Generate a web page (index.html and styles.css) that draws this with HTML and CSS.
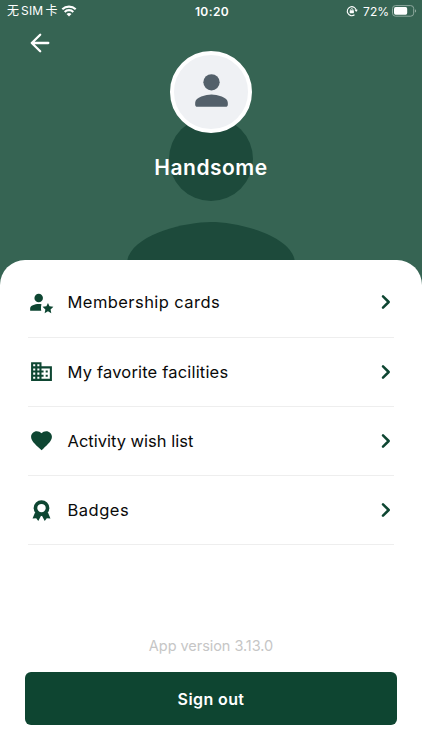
FILE: index.html
```html
<!DOCTYPE html>
<html lang="en">
<head>
  <meta charset="UTF-8" />
  <meta name="viewport" content="width=device-width, initial-scale=1.0"/>
  <title>Profile</title>
  <link rel="stylesheet" href="styles.css">
</head>
<body>

  <header class="hero">
    <svg class="hero-shape" viewBox="0 0 24 24">
      <circle cx="12" cy="8" r="4"/>
      <path d="M12 14c-2.67 0-8 1.34-8 4v2h16v-2c0-2.66-5.33-4-8-4z"/>
    </svg>

    <div class="status-bar">
      <div class="status-left">
        <span class="carrier">无<span class="sim">SIM</span>卡</span>
        <svg class="wifi" viewBox="0 0 16 12">
          <path d="M1.3 4.3a9.6 9.6 0 0 1 13.4 0M3.7 6.9a6.2 6.2 0 0 1 8.6 0"/>
          <path class="dot" d="M8 11.6L5.5 9.1a3.6 3.6 0 0 1 5 0z"/>
        </svg>
      </div>
      <span class="time">10:20</span>
      <div class="status-right">
        <svg class="lock" viewBox="0 0 12 12">
          <path d="M10.2 5.2A4.5 4.5 0 1 0 8.500 9.800"/>
          <path class="fill" d="M8.500 4.800h3.300L10.200 7z"/>
          <rect class="fill" x="3.700" y="5.200" width="4.200" height="3.100" rx=".5"/>
          <path class="shackle" d="M4.700 5.400v-.7a1.100 1.100 0 0 1 2.200 0v.7"/>
        </svg>
        <span class="percent">72%</span>
        <svg class="battery" viewBox="0 0 25 12">
          <rect class="shell" x=".5" y=".6" width="21.2" height="10.6" rx="3"/>
          <rect class="level" x="2" y="2.1" width="13.2" height="7.6" rx="1.6"/>
          <path class="nub" d="M23 4.2c1.5.4 1.5 3 0 3.4z"/>
        </svg>
      </div>
    </div>

    <button class="back" aria-label="Back">
      <svg viewBox="0 0 20 20">
        <path d="M18.3 10H1.8M10.2 1.8L1.8 10l8.4 8.2"/>
      </svg>
    </button>

    <div class="profile">
      <div class="avatar">
        <svg viewBox="0 0 24 24">
          <circle cx="12" cy="8" r="4"/>
          <path d="M12 14c-2.67 0-8 1.34-8 4v1c0 .55.45 1 1 1h14c.55 0 1-.45 1-1v-1c0-2.66-5.33-4-8-4z"/>
        </svg>
      </div>
      <h1>Handsome</h1>
    </div>
  </header>

  <main class="sheet">
    <nav class="menu">
      <a class="item">
        <svg class="icon" viewBox="0 0 24 24">
          <circle cx="9.3" cy="7.6" r="4.1"/>
          <path d="M12 13.700c-4.300-1-10.900.8-10.900 4V20h10.700c-.5-2-.4-4.200.2-6.300z"/>
          <path d="M18.200 12.400l1.500 3.300 3.700.4-2.700 2.500.7 3.600-3.200-1.800-3.200 1.800.7-3.600-2.700-2.500 3.700-.4z"/>
        </svg>
        <span class="label cards">Membership cards</span>
        <svg class="chevron" viewBox="0 0 10 16"><path d="M2 2.300L7.700 8 2 13.700"/></svg>
      </a>
      <a class="item">
        <svg class="icon" viewBox="0 0 24 24">
          <path d="M12 7V3H2v18h20V7H12zM6 19H4v-2h2v2zm0-4H4v-2h2v2zm0-4H4V9h2v2zm0-4H4V5h2v2zm4 12H8v-2h2v2zm0-4H8v-2h2v2zm0-4H8V9h2v2zm0-4H8V5h2v2zm10 12h-8v-2h2v-2h-2v-2h2v-2h-2V9h8v10zm-2-8h-2v2h2v-2zm0 4h-2v2h2v-2z"/>
        </svg>
        <span class="label facilities">My favorite facilities</span>
        <svg class="chevron" viewBox="0 0 10 16"><path d="M2 2.300L7.700 8 2 13.700"/></svg>
      </a>
      <a class="item">
        <svg class="icon" viewBox="0 0 24 24">
          <path d="M12 21.350l-1.450-1.320C5.400 15.360 2 12.280 2 8.500 2 5.420 4.420 3 7.500 3c1.740 0 3.410.81 4.500 2.090C13.090 3.810 14.760 3 16.500 3 19.580 3 22 5.420 22 8.500c0 3.780-3.400 6.860-8.550 11.540z"/>
        </svg>
        <span class="label wish">Activity wish list</span>
        <svg class="chevron" viewBox="0 0 10 16"><path d="M2 2.300L7.700 8 2 13.700"/></svg>
      </a>
      <a class="item">
        <svg class="icon" viewBox="0 0 24 24">
          <circle class="ring" cx="12" cy="9.700" r="5.800"/>
          <path d="M5.800 13.800l-2.400 5.800 3.500-.2 2 2.700 2.800-5.300zM18.200 13.800l2.400 5.800-3.500-.2-2 2.700-2.800-5.300z"/>
        </svg>
        <span class="label badges">Badges</span>
        <svg class="chevron" viewBox="0 0 10 16"><path d="M2 2.300L7.700 8 2 13.700"/></svg>
      </a>
    </nav>

    <footer>
      <p class="version">App version 3.13.0</p>
      <button class="sign-out"><span>Sign out</span></button>
    </footer>
  </main>

</body>
</html>
```
FILE: styles.css
```css
* {
  box-sizing: border-box;
}

body {
  font-family: Inter, "Noto Sans CJK SC", sans-serif;
  margin: 0;
  height: 750px;
  display: flex;
  flex-direction: column;
  background-color: #366453;
  color: #0a0a0a;
  overflow: hidden;
}

svg {
  display: block;
  flex: none;
}

button {
  border: none;
  padding: 0;
  font-family: inherit;
  cursor: pointer;
}

.hero {
  position: relative;
  height: 260px;
  flex: none;
  color: white;
}

/* large silhouette behind the profile */
.hero-shape {
  position: absolute;
  left: 85px;
  top: 74.5px;
  width: 252px;
  height: 252px;
  fill: #1d4a3b;
}

.status-bar {
  position: relative;
  display: grid;
  grid-template-columns: 1fr auto 1fr;
  align-items: center;
  height: 22px;
  padding: 0 5px 0 7px;
  font-size: 12px;
}

.status-left,
.status-right {
  display: flex;
  align-items: center;
}

.status-right {
  justify-content: flex-end;
}

.carrier {
  display: flex;
  align-items: center;
  gap: 2px;
  line-height: 20px;
  width: 54px;
}

.sim {
  letter-spacing: 0.2px;
}

.wifi {
  width: 16px;
  height: 12px;
  fill: none;
  stroke: white;
  stroke-width: 2.1;
}

.wifi .dot {
  fill: white;
  stroke: none;
}

.time {
  font-weight: 600;
  letter-spacing: 0.4px;
}

.lock {
  width: 12px;
  height: 12px;
  margin-right: 5px;
  fill: none;
  stroke: white;
  stroke-width: 1.1;
}

.lock .fill {
  fill: white;
  stroke: none;
}

.lock .shackle {
  stroke-width: 0.8;
}

.percent {
  margin-right: 3px;
}

.battery {
  width: 25px;
  height: 12px;
}

.shell {
  fill: none;
  stroke: #8fa99f;
}

.level {
  fill: white;
}

.nub {
  fill: #8fa99f;
}

.back {
  position: absolute;
  left: 30px;
  top: 33px;
  background: none;
}

.back svg {
  width: 20px;
  height: 20px;
  fill: none;
  stroke: white;
  stroke-width: 2.3;
  stroke-linecap: round;
  stroke-linejoin: round;
}

.profile {
  position: relative;
  display: flex;
  flex-direction: column;
  align-items: center;
  padding-top: 29px;
}

.avatar {
  display: flex;
  justify-content: center;
  width: 82px;
  height: 82px;
  padding-top: 10.5px;
  border: 4px solid white;
  border-radius: 50%;
  background-color: #eff1f4;
}

.avatar svg {
  width: 49px;
  height: 49px;
  fill: #53606a;
}

h1 {
  margin: 20px 0 0;
  font-size: 21px;
  line-height: 30px;
  font-weight: 600;
  letter-spacing: 0.5px;
}

.sheet {
  position: relative;
  flex: 1;
  display: flex;
  flex-direction: column;
  justify-content: space-between;
  padding: 8.4px 28px 25px;
  background-color: white;
  border-radius: 25px 25px 0 0;
}

.item {
  display: flex;
  align-items: center;
  height: 69.2px;
  padding: 0 3px 0 1px;
  border-bottom: 1px solid #eeeeee;
}

.icon {
  width: 25px;
  height: 25px;
  margin-right: 13.5px;
  fill: #0e4632;
}

.icon .ring {
  fill: none;
  stroke: #0e4632;
  stroke-width: 3.5;
}

.label {
  flex: 1;
  font-size: 16.5px;
  line-height: 24px;
}

.cards {
  letter-spacing: 0.43px;
}

.facilities {
  letter-spacing: 0.18px;
}

.badges {
  letter-spacing: 0.5px;
}

.chevron {
  width: 10px;
  height: 16px;
  fill: none;
  stroke: #0e4632;
  stroke-width: 2.5;
  stroke-linecap: round;
  stroke-linejoin: round;
}

footer {
  margin: 0 -3px;
  text-align: center;
}

.version {
  margin: 0 0 16px;
  font-size: 14.5px;
  line-height: 20px;
  font-weight: 400;
  letter-spacing: -0.05px;
  color: #c6c6c6;
}

.sign-out {
  display: block;
  width: 100%;
  height: 53px;
  border-radius: 6px;
  background-color: #0e4531;
  color: white;
  font-size: 16px;
  font-weight: 600;
  letter-spacing: 0.4px;
}
```
